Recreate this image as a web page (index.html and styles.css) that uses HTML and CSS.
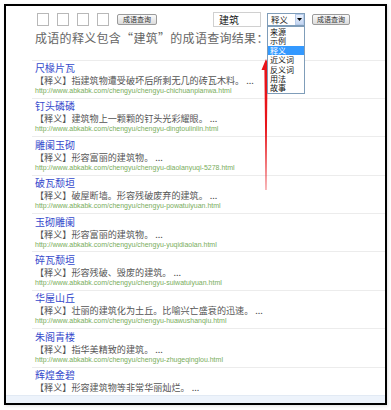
FILE: index.html
```html
<!DOCTYPE html>
<html lang="zh-CN">
<head>
<meta charset="utf-8" />
<title>成语查询</title>
<link rel="stylesheet" href="styles.css">
</head>
<body>
<div class="frame">

<div class="toolbar">
	<span class="box"></span>
	<span class="box"></span>
	<span class="box"></span>
	<span class="box"></span>
	<span class="btn btn-left">成语查询</span>
	<span class="word">建筑</span>
	<span class="select">
		<span class="select-text">释义</span>
		<span class="select-arrow"><svg width="5" height="3" viewBox="0 0 5 3"><path d="M0 0H5L2.5 3Z" fill="#000"/></svg></span>
		<ul class="options">
			<li>来源</li>
			<li>示例</li>
			<li class="picked">释义</li>
			<li>近义词</li>
			<li>反义词</li>
			<li>用法</li>
			<li>故事</li>
		</ul>
	</span>
	<span class="btn">成语查询</span>
</div>

<h1>成语的释义包含“建筑”的成语查询结果：</h1>

<div class="list">
<div class="item">
<a class="name">尺椽片瓦</a>
<p class="desc">【释义】指建筑物遭受破坏后所剩无几的砖瓦木料。 ...</p>
<p class="url">http://www.abkabk.com/chengyu/chengyu-chichuanpianwa.html</p>
</div>
<div class="item">
<a class="name">钉头磷磷</a>
<p class="desc">【释义】建筑物上一颗颗的钉头光彩耀眼。 ...</p>
<p class="url">http://www.abkabk.com/chengyu/chengyu-dingtoulinlin.html</p>
</div>
<div class="item">
<a class="name">雕阑玉砌</a>
<p class="desc">【释义】形容富丽的建筑物。 ...</p>
<p class="url">http://www.abkabk.com/chengyu/chengyu-diaolanyuqi-5278.html</p>
</div>
<div class="item">
<a class="name">破瓦颓垣</a>
<p class="desc">【释义】破屋断墙。形容残破废弃的建筑。 ...</p>
<p class="url">http://www.abkabk.com/chengyu/chengyu-powatuiyuan.html</p>
</div>
<div class="item">
<a class="name">玉砌雕阑</a>
<p class="desc">【释义】形容富丽的建筑物。 ...</p>
<p class="url">http://www.abkabk.com/chengyu/chengyu-yuqidiaolan.html</p>
</div>
<div class="item">
<a class="name">碎瓦颓垣</a>
<p class="desc">【释义】形容残破、毁废的建筑。 ...</p>
<p class="url">http://www.abkabk.com/chengyu/chengyu-suiwatuiyuan.html</p>
</div>
<div class="item">
<a class="name">华屋山丘</a>
<p class="desc">【释义】壮丽的建筑化为土丘。比喻兴亡盛衰的迅速。 ...</p>
<p class="url">http://www.abkabk.com/chengyu/chengyu-huawushanqiu.html</p>
</div>
<div class="item">
<a class="name">朱阁青楼</a>
<p class="desc">【释义】指华美精致的建筑。 ...</p>
<p class="url">http://www.abkabk.com/chengyu/chengyu-zhugeqinglou.html</p>
</div>
<div class="item">
<a class="name">辉煌金碧</a>
<p class="desc">【释义】形容建筑物等非常华丽灿烂。 ...</p>
</div>
</div>

<div class="footer"></div>

<svg class="arrow" width="12" height="134" viewBox="0 0 12 134">
	<path d="M6 0L10.5 11H7.6L6.3 131H5.7L4.4 11H1.5Z" fill="#e8141a"/>
</svg>

</div>
</body>
</html>
```

FILE: styles.css
```css
body {
	margin: 0;
	background-color: #FFFFFF;
	font-family: "Noto Sans CJK SC", sans-serif;
}
.frame {
	position: relative;
	box-sizing: border-box;
	width: 383px;
	height: 401px;
	margin: 4px;
	border: 2px solid #000000;
	display: flex;
	flex-direction: column;
	box-shadow: 1px 1px 3px rgba(0,0,0,0.12);
}
.toolbar {
	display: flex;
	align-items: center;
	height: 15px;
	margin-top: 6px;
	padding-left: 31px;
}
.box {
	box-sizing: border-box;
	width: 12px;
	height: 13px;
	margin-right: 8px;
	border: 1px solid #B8B8B8;
	background-color: #FFFFFF;
}
.btn {
	box-sizing: border-box;
	height: 11px;
	padding: 0 4px;
	border: 1px solid #9A9A9A;
	border-radius: 2px;
	background: linear-gradient(#FAFAFA, #DCDCDC);
	font-size: 7px;
	line-height: 9px;
	color: #333333;
	white-space: nowrap;
}
.btn-left {
	width: 40px;
	text-align: center;
}
.word {
	box-sizing: border-box;
	width: 48px;
	height: 15px;
	margin-left: 56px;
	padding-left: 5px;
	border: 1px solid #D0D0D0;
	font-size: 10px;
	line-height: 13px;
	color: #222222;
}
.select {
	position: relative;
	box-sizing: border-box;
	display: flex;
	align-items: center;
	width: 38px;
	height: 13px;
	margin-left: 6px;
	margin-right: 7px;
	border: 1px solid #7F9DB9;
	background-color: #FFFFFF;
}
.select-text {
	flex: 1;
	padding-left: 3px;
	font-size: 8.5px;
	line-height: 11px;
	color: #222222;
}
.select-arrow {
	box-sizing: border-box;
	display: flex;
	align-items: center;
	justify-content: center;
	width: 9px;
	height: 11px;
	border: 1px solid #B7CBEA;
	background: linear-gradient(#E8F0FC, #C4D6F2);
}
.options {
	position: absolute;
	left: -1px;
	top: 12px;
	box-sizing: border-box;
	width: 38px;
	margin: 0;
	padding: 0;
	list-style: none;
	border: 1px solid #7F9DB9;
	background-color: #FFFFFF;
	z-index: 2;
}
.options li {
	height: 9.4px;
	padding-left: 2px;
	font-size: 8px;
	line-height: 9.4px;
	color: #111111;
}
.options .picked {
	background-color: #3399FF;
	color: #FFFFFF;
}
h1 {
	margin: 2px 0 0 0;
	padding-left: 29px;
	font-size: 12px;
	font-weight: normal;
	line-height: 18px;
	letter-spacing: 0.3px;
	color: #666666;
	white-space: nowrap;
}
.list {
	flex: 1;
	overflow: hidden;
	margin-top: 12.5px;
	margin-left: 26px;
}
.item {
	box-sizing: border-box;
	height: 38.4px;
	padding: 1.5px 0 0 3px;
	border-top: 1px solid #ECECEC;
}
.name {
	display: block;
	font-size: 10px;
	line-height: 12px;
	color: #3549CC;
}
.desc {
	margin: 0;
	font-size: 9.1px;
	line-height: 13px;
	color: #555555;
	white-space: nowrap;
}
.url {
	margin: 0;
	font-family: "Liberation Sans", sans-serif;
	font-size: 7px;
	line-height: 7px;
	color: #79AD5C;
	white-space: nowrap;
}
.footer {
	height: 8px;
	background-color: #EDF3FB;
	border-top: 1px solid #E2EAF4;
	box-sizing: border-box;
}
.arrow {
	position: absolute;
	left: 254px;
	top: 53px;
}
```
